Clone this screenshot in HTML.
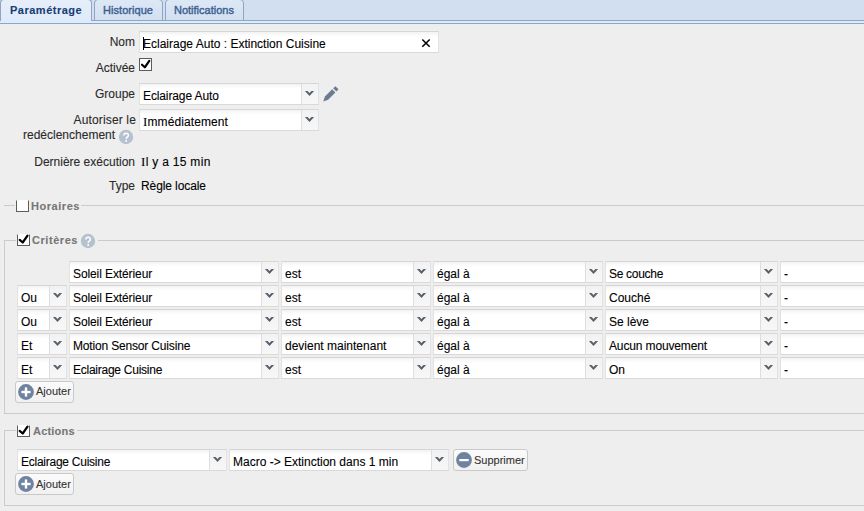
<!DOCTYPE html>
<html><head><meta charset="utf-8"><style>
html,body{margin:0;padding:0;}
body{width:864px;height:511px;overflow:hidden;position:relative;background:#eeeeee;font-family:'Liberation Sans', sans-serif;}
div{box-sizing:content-box;}
.t{-webkit-text-stroke:0.1px currentColor;}
.fld{position:absolute;background:linear-gradient(#f2f2f2,#fbfbfb 3px,#fff 5px);border:1px solid #e2e2e2;border-top-color:#d6d6d6;border-bottom-color:#d9d9d9;}
.trg{position:absolute;background:linear-gradient(#f2f2f2,#f7f7f7);border-left:1px solid #dedede;}
.btn{position:absolute;border:1px solid #c9c9c9;border-radius:3px;background:linear-gradient(#fbfbfb,#f1f1f1);}
.ln{position:absolute;background:#cbcbcb;}
</style></head><body>
<div style="position:absolute;left:0;top:0;width:864px;height:20px;background:#d2dff0;border-bottom:1px solid #8fa5c2"></div>
<div style="position:absolute;left:0;top:21px;width:864px;height:2px;background:#deebfb;border-bottom:1px solid #8fa5c2"></div>
<div style="position:absolute;left:0;top:24px;width:864px;height:1px;background:#e9eff0"></div>
<div style="position:absolute;left:94px;top:-1px;width:67px;height:20px;background:linear-gradient(#dde8f6,#d3e0f1);border:1px solid #8fa5c2;border-radius:4px 4px 0 0"></div>
<div style="position:absolute;left:165px;top:-1px;width:77px;height:20px;background:linear-gradient(#dde8f6,#d3e0f1);border:1px solid #8fa5c2;border-radius:4px 4px 0 0"></div>
<div style="position:absolute;left:0px;top:-1px;width:90px;height:21px;background:linear-gradient(#e6eef9,#deebfb);border:1px solid #8fa5c2;border-bottom:0;border-radius:4px 4px 0 0"></div>
<div class="t" style="position:absolute;top:4px;font:bold 11px/13px 'Liberation Sans', sans-serif;color:#173d75;white-space:nowrap;letter-spacing:0.5px;left:10px;">Paramétrage</div>
<div class="t" style="position:absolute;top:4px;font:normal 11px/13px 'Liberation Sans', sans-serif;color:#3d5f92;white-space:nowrap;letter-spacing:0.05px;left:103px;-webkit-text-stroke:0.4px #3d5f92;">Historique</div>
<div class="t" style="position:absolute;top:4px;font:normal 11px/13px 'Liberation Sans', sans-serif;color:#3d5f92;white-space:nowrap;left:174px;-webkit-text-stroke:0.4px #3d5f92;">Notifications</div>
<div class="t" style="position:absolute;top:35px;font:normal 12px/14px 'Liberation Sans', sans-serif;color:#2a2a2a;white-space:nowrap;right:729px;text-align:right;">Nom</div>
<div class="t" style="position:absolute;top:61px;font:normal 12px/14px 'Liberation Sans', sans-serif;color:#2a2a2a;white-space:nowrap;right:729px;text-align:right;">Activée</div>
<div class="t" style="position:absolute;top:87px;font:normal 12px/14px 'Liberation Sans', sans-serif;color:#2a2a2a;white-space:nowrap;right:729px;text-align:right;">Groupe</div>
<div class="t" style="position:absolute;top:113px;font:normal 12px/14px 'Liberation Sans', sans-serif;color:#2a2a2a;white-space:nowrap;letter-spacing:0.15px;right:728px;text-align:right;">Autoriser le</div>
<div class="t" style="position:absolute;top:128px;font:normal 12px/14px 'Liberation Sans', sans-serif;color:#2a2a2a;white-space:nowrap;left:23px;">redéclenchement</div>
<div class="t" style="position:absolute;top:155px;font:normal 12px/14px 'Liberation Sans', sans-serif;color:#2a2a2a;white-space:nowrap;right:729px;text-align:right;">Dernière exécution</div>
<div class="t" style="position:absolute;top:179px;font:normal 12px/14px 'Liberation Sans', sans-serif;color:#2a2a2a;white-space:nowrap;right:729px;text-align:right;">Type</div>
<div class="t" style="position:absolute;top:155px;font:normal 12px/14px 'Liberation Sans', sans-serif;color:#000;white-space:nowrap;letter-spacing:0.3px;left:141px;"><span style="font-family:'Liberation Serif';font-size:13px">I</span>l y a 15 min</div>
<div class="t" style="position:absolute;top:179px;font:normal 12px/14px 'Liberation Sans', sans-serif;color:#000;white-space:nowrap;letter-spacing:-0.1px;left:141px;">Règle locale</div>
<div class="fld" style="left:139px;top:31px;width:298px;height:20px"></div>
<div class="t" style="position:absolute;top:37px;font:normal 12px/14px 'Liberation Sans', sans-serif;color:#000;white-space:nowrap;left:143px;">Eclairage Auto : Extinction Cuisine</div>
<div style="position:absolute;left:143px;top:37px;width:1px;height:13px;background:#000"></div>
<svg width="10" height="10" style="position:absolute;left:421px;top:38px" viewBox="0 0 10 10"><path d="M1.3,1.5 L8.7,8.7 M8.7,1.5 L1.3,8.7" stroke="#000" stroke-width="1.6"/></svg>
<div style="position:absolute;left:139px;top:58px;width:11px;height:11px;background:#fff;border:1px solid #5c5c5c;"></div>
<svg width="13" height="13" style="position:absolute;left:139px;top:58px" viewBox="0 0 13 13"><path d="M3,6.7 L5.8,9.3 L10.3,2.9" fill="none" stroke="#000" stroke-width="2.2" stroke-linecap="round" stroke-linejoin="round"/></svg>
<div class="fld" style="left:139px;top:83px;width:178px;height:20px"></div>
<div class="trg" style="left:301px;top:84px;width:16px;height:20px"></div>
<svg width="11" height="6" style="position:absolute;left:304px;top:91px" viewBox="0 0 11 6"><path d="M0.9,0 L3.6,0 L5.5,2.1 L7.4,0 L10.1,0 L5.5,4.9 Z" fill="#58626e"/></svg>
<div class="t" style="position:absolute;top:89px;font:normal 12px/14px 'Liberation Sans', sans-serif;color:#000;white-space:nowrap;letter-spacing:-0.12px;left:143px;">Eclairage Auto</div>
<div class="fld" style="left:139px;top:109px;width:178px;height:20px"></div>
<div class="trg" style="left:301px;top:110px;width:16px;height:20px"></div>
<svg width="11" height="6" style="position:absolute;left:304px;top:117px" viewBox="0 0 11 6"><path d="M0.9,0 L3.6,0 L5.5,2.1 L7.4,0 L10.1,0 L5.5,4.9 Z" fill="#58626e"/></svg>
<div class="t" style="position:absolute;top:115px;font:normal 12px/14px 'Liberation Sans', sans-serif;color:#000;white-space:nowrap;letter-spacing:0.1px;left:143px;"><span style="font-family:'Liberation Serif';font-size:13px">I</span>mmédiatement</div>
<svg width="20" height="20" style="position:absolute;left:320px;top:84px" viewBox="0 0 20 20"><g transform="translate(3.3,17.4) rotate(-45)" fill="#6b7b91"><path d="M0,0 L4.6,-2.25 L14.8,-2.25 L14.8,2.25 L4.6,2.25 Z"/><rect x="16.2" y="-2.25" width="3.1" height="4.5"/></g></svg>
<svg width="16" height="16" style="position:absolute;left:118px;top:128.5px" viewBox="0 0 16 16"><circle cx="8" cy="8" r="7.2" fill="#b6c1d0"/><path d="M5.8,6.4 C5.8,3.5 10.4,3.5 10.4,6.2 C10.4,7.9 8.2,8 8.2,10" fill="none" stroke="#fff" stroke-width="1.5"/><rect x="7.35" y="11.1" width="1.7" height="1.7" fill="#fff"/></svg>
<div class="ln" style="left:4px;top:205px;width:11px;height:1px"></div>
<div class="ln" style="left:81px;top:205px;width:783px;height:1px"></div>
<div style="position:absolute;left:16px;top:200px;width:11px;height:11px;background:#fff;border:1px solid #5c5c5c;border-top-color:transparent;height:10px;"></div>
<div class="t" style="position:absolute;top:200px;font:bold 11px/13px 'Liberation Sans', sans-serif;color:#777;white-space:nowrap;letter-spacing:0.55px;left:31px;">Horaires</div>
<div class="ln" style="left:4px;top:240px;width:12px;height:1px"></div>
<div class="ln" style="left:98px;top:240px;width:766px;height:1px"></div>
<div class="ln" style="left:4px;top:240px;width:1px;height:174px"></div>
<div class="ln" style="left:4px;top:413px;width:860px;height:1px"></div>
<div style="position:absolute;left:17px;top:234px;width:11px;height:11px;background:#fff;border:1px solid #5c5c5c;border-top-color:transparent;height:10px;"></div>
<svg width="13" height="13" style="position:absolute;left:17px;top:234px" viewBox="0 0 13 13"><path d="M2.7,5.9 L5.7,8.5 L10.5,1.7" fill="none" stroke="#000" stroke-width="2.2" stroke-linecap="round" stroke-linejoin="round"/></svg>
<div class="t" style="position:absolute;top:234px;font:bold 11px/13px 'Liberation Sans', sans-serif;color:#777;white-space:nowrap;letter-spacing:0.55px;left:32px;">Critères</div>
<svg width="16" height="16" style="position:absolute;left:80px;top:233px" viewBox="0 0 16 16"><circle cx="8" cy="8" r="7.2" fill="#b6c1d0"/><path d="M5.8,6.4 C5.8,3.5 10.4,3.5 10.4,6.2 C10.4,7.9 8.2,8 8.2,10" fill="none" stroke="#fff" stroke-width="1.5"/><rect x="7.35" y="11.1" width="1.7" height="1.7" fill="#fff"/></svg>
<div class="fld" style="left:69px;top:261px;width:208px;height:20px"></div>
<div class="trg" style="left:261px;top:262px;width:16px;height:20px"></div>
<svg width="11" height="6" style="position:absolute;left:264px;top:269px" viewBox="0 0 11 6"><path d="M0.9,0 L3.6,0 L5.5,2.1 L7.4,0 L10.1,0 L5.5,4.9 Z" fill="#58626e"/></svg>
<div class="t" style="position:absolute;top:267px;font:normal 12px/14px 'Liberation Sans', sans-serif;color:#000;white-space:nowrap;letter-spacing:-0.1px;left:73px;">Soleil Extérieur</div>
<div class="fld" style="left:281px;top:261px;width:148px;height:20px"></div>
<div class="trg" style="left:413px;top:262px;width:16px;height:20px"></div>
<svg width="11" height="6" style="position:absolute;left:416px;top:269px" viewBox="0 0 11 6"><path d="M0.9,0 L3.6,0 L5.5,2.1 L7.4,0 L10.1,0 L5.5,4.9 Z" fill="#58626e"/></svg>
<div class="t" style="position:absolute;top:267px;font:normal 12px/14px 'Liberation Sans', sans-serif;color:#000;white-space:nowrap;left:285px;">est</div>
<div class="fld" style="left:433px;top:261px;width:168px;height:20px"></div>
<div class="trg" style="left:585px;top:262px;width:16px;height:20px"></div>
<svg width="11" height="6" style="position:absolute;left:588px;top:269px" viewBox="0 0 11 6"><path d="M0.9,0 L3.6,0 L5.5,2.1 L7.4,0 L10.1,0 L5.5,4.9 Z" fill="#58626e"/></svg>
<div class="t" style="position:absolute;top:267px;font:normal 12px/14px 'Liberation Sans', sans-serif;color:#000;white-space:nowrap;left:437px;">égal à</div>
<div class="fld" style="left:605px;top:261px;width:171px;height:20px"></div>
<div class="trg" style="left:760px;top:262px;width:16px;height:20px"></div>
<svg width="11" height="6" style="position:absolute;left:763px;top:269px" viewBox="0 0 11 6"><path d="M0.9,0 L3.6,0 L5.5,2.1 L7.4,0 L10.1,0 L5.5,4.9 Z" fill="#58626e"/></svg>
<div class="t" style="position:absolute;top:267px;font:normal 12px/14px 'Liberation Sans', sans-serif;color:#000;white-space:nowrap;letter-spacing:-0.3px;left:609px;">Se couche</div>
<div class="fld" style="left:780px;top:261px;width:119px;height:20px"></div>
<div class="t" style="position:absolute;top:267px;font:normal 12px/14px 'Liberation Sans', sans-serif;color:#000;white-space:nowrap;left:784px;">-</div>
<div class="fld" style="left:17px;top:285px;width:48px;height:20px"></div>
<div class="trg" style="left:49px;top:286px;width:16px;height:20px"></div>
<svg width="11" height="6" style="position:absolute;left:52px;top:293px" viewBox="0 0 11 6"><path d="M0.9,0 L3.6,0 L5.5,2.1 L7.4,0 L10.1,0 L5.5,4.9 Z" fill="#58626e"/></svg>
<div class="t" style="position:absolute;top:291px;font:normal 12px/14px 'Liberation Sans', sans-serif;color:#000;white-space:nowrap;left:21px;">Ou</div>
<div class="fld" style="left:69px;top:285px;width:208px;height:20px"></div>
<div class="trg" style="left:261px;top:286px;width:16px;height:20px"></div>
<svg width="11" height="6" style="position:absolute;left:264px;top:293px" viewBox="0 0 11 6"><path d="M0.9,0 L3.6,0 L5.5,2.1 L7.4,0 L10.1,0 L5.5,4.9 Z" fill="#58626e"/></svg>
<div class="t" style="position:absolute;top:291px;font:normal 12px/14px 'Liberation Sans', sans-serif;color:#000;white-space:nowrap;letter-spacing:-0.1px;left:73px;">Soleil Extérieur</div>
<div class="fld" style="left:281px;top:285px;width:148px;height:20px"></div>
<div class="trg" style="left:413px;top:286px;width:16px;height:20px"></div>
<svg width="11" height="6" style="position:absolute;left:416px;top:293px" viewBox="0 0 11 6"><path d="M0.9,0 L3.6,0 L5.5,2.1 L7.4,0 L10.1,0 L5.5,4.9 Z" fill="#58626e"/></svg>
<div class="t" style="position:absolute;top:291px;font:normal 12px/14px 'Liberation Sans', sans-serif;color:#000;white-space:nowrap;left:285px;">est</div>
<div class="fld" style="left:433px;top:285px;width:168px;height:20px"></div>
<div class="trg" style="left:585px;top:286px;width:16px;height:20px"></div>
<svg width="11" height="6" style="position:absolute;left:588px;top:293px" viewBox="0 0 11 6"><path d="M0.9,0 L3.6,0 L5.5,2.1 L7.4,0 L10.1,0 L5.5,4.9 Z" fill="#58626e"/></svg>
<div class="t" style="position:absolute;top:291px;font:normal 12px/14px 'Liberation Sans', sans-serif;color:#000;white-space:nowrap;left:437px;">égal à</div>
<div class="fld" style="left:605px;top:285px;width:171px;height:20px"></div>
<div class="trg" style="left:760px;top:286px;width:16px;height:20px"></div>
<svg width="11" height="6" style="position:absolute;left:763px;top:293px" viewBox="0 0 11 6"><path d="M0.9,0 L3.6,0 L5.5,2.1 L7.4,0 L10.1,0 L5.5,4.9 Z" fill="#58626e"/></svg>
<div class="t" style="position:absolute;top:291px;font:normal 12px/14px 'Liberation Sans', sans-serif;color:#000;white-space:nowrap;left:609px;">Couché</div>
<div class="fld" style="left:780px;top:285px;width:119px;height:20px"></div>
<div class="t" style="position:absolute;top:291px;font:normal 12px/14px 'Liberation Sans', sans-serif;color:#000;white-space:nowrap;left:784px;">-</div>
<div class="fld" style="left:17px;top:309px;width:48px;height:20px"></div>
<div class="trg" style="left:49px;top:310px;width:16px;height:20px"></div>
<svg width="11" height="6" style="position:absolute;left:52px;top:317px" viewBox="0 0 11 6"><path d="M0.9,0 L3.6,0 L5.5,2.1 L7.4,0 L10.1,0 L5.5,4.9 Z" fill="#58626e"/></svg>
<div class="t" style="position:absolute;top:315px;font:normal 12px/14px 'Liberation Sans', sans-serif;color:#000;white-space:nowrap;left:21px;">Ou</div>
<div class="fld" style="left:69px;top:309px;width:208px;height:20px"></div>
<div class="trg" style="left:261px;top:310px;width:16px;height:20px"></div>
<svg width="11" height="6" style="position:absolute;left:264px;top:317px" viewBox="0 0 11 6"><path d="M0.9,0 L3.6,0 L5.5,2.1 L7.4,0 L10.1,0 L5.5,4.9 Z" fill="#58626e"/></svg>
<div class="t" style="position:absolute;top:315px;font:normal 12px/14px 'Liberation Sans', sans-serif;color:#000;white-space:nowrap;letter-spacing:-0.1px;left:73px;">Soleil Extérieur</div>
<div class="fld" style="left:281px;top:309px;width:148px;height:20px"></div>
<div class="trg" style="left:413px;top:310px;width:16px;height:20px"></div>
<svg width="11" height="6" style="position:absolute;left:416px;top:317px" viewBox="0 0 11 6"><path d="M0.9,0 L3.6,0 L5.5,2.1 L7.4,0 L10.1,0 L5.5,4.9 Z" fill="#58626e"/></svg>
<div class="t" style="position:absolute;top:315px;font:normal 12px/14px 'Liberation Sans', sans-serif;color:#000;white-space:nowrap;left:285px;">est</div>
<div class="fld" style="left:433px;top:309px;width:168px;height:20px"></div>
<div class="trg" style="left:585px;top:310px;width:16px;height:20px"></div>
<svg width="11" height="6" style="position:absolute;left:588px;top:317px" viewBox="0 0 11 6"><path d="M0.9,0 L3.6,0 L5.5,2.1 L7.4,0 L10.1,0 L5.5,4.9 Z" fill="#58626e"/></svg>
<div class="t" style="position:absolute;top:315px;font:normal 12px/14px 'Liberation Sans', sans-serif;color:#000;white-space:nowrap;left:437px;">égal à</div>
<div class="fld" style="left:605px;top:309px;width:171px;height:20px"></div>
<div class="trg" style="left:760px;top:310px;width:16px;height:20px"></div>
<svg width="11" height="6" style="position:absolute;left:763px;top:317px" viewBox="0 0 11 6"><path d="M0.9,0 L3.6,0 L5.5,2.1 L7.4,0 L10.1,0 L5.5,4.9 Z" fill="#58626e"/></svg>
<div class="t" style="position:absolute;top:315px;font:normal 12px/14px 'Liberation Sans', sans-serif;color:#000;white-space:nowrap;left:609px;">Se lève</div>
<div class="fld" style="left:780px;top:309px;width:119px;height:20px"></div>
<div class="t" style="position:absolute;top:315px;font:normal 12px/14px 'Liberation Sans', sans-serif;color:#000;white-space:nowrap;left:784px;">-</div>
<div class="fld" style="left:17px;top:333px;width:48px;height:20px"></div>
<div class="trg" style="left:49px;top:334px;width:16px;height:20px"></div>
<svg width="11" height="6" style="position:absolute;left:52px;top:341px" viewBox="0 0 11 6"><path d="M0.9,0 L3.6,0 L5.5,2.1 L7.4,0 L10.1,0 L5.5,4.9 Z" fill="#58626e"/></svg>
<div class="t" style="position:absolute;top:339px;font:normal 12px/14px 'Liberation Sans', sans-serif;color:#000;white-space:nowrap;left:21px;">Et</div>
<div class="fld" style="left:69px;top:333px;width:208px;height:20px"></div>
<div class="trg" style="left:261px;top:334px;width:16px;height:20px"></div>
<svg width="11" height="6" style="position:absolute;left:264px;top:341px" viewBox="0 0 11 6"><path d="M0.9,0 L3.6,0 L5.5,2.1 L7.4,0 L10.1,0 L5.5,4.9 Z" fill="#58626e"/></svg>
<div class="t" style="position:absolute;top:339px;font:normal 12px/14px 'Liberation Sans', sans-serif;color:#000;white-space:nowrap;letter-spacing:-0.17px;left:73px;">Motion Sensor Cuisine</div>
<div class="fld" style="left:281px;top:333px;width:148px;height:20px"></div>
<div class="trg" style="left:413px;top:334px;width:16px;height:20px"></div>
<svg width="11" height="6" style="position:absolute;left:416px;top:341px" viewBox="0 0 11 6"><path d="M0.9,0 L3.6,0 L5.5,2.1 L7.4,0 L10.1,0 L5.5,4.9 Z" fill="#58626e"/></svg>
<div class="t" style="position:absolute;top:339px;font:normal 12px/14px 'Liberation Sans', sans-serif;color:#000;white-space:nowrap;left:285px;">devient maintenant</div>
<div class="fld" style="left:433px;top:333px;width:168px;height:20px"></div>
<div class="trg" style="left:585px;top:334px;width:16px;height:20px"></div>
<svg width="11" height="6" style="position:absolute;left:588px;top:341px" viewBox="0 0 11 6"><path d="M0.9,0 L3.6,0 L5.5,2.1 L7.4,0 L10.1,0 L5.5,4.9 Z" fill="#58626e"/></svg>
<div class="t" style="position:absolute;top:339px;font:normal 12px/14px 'Liberation Sans', sans-serif;color:#000;white-space:nowrap;left:437px;">égal à</div>
<div class="fld" style="left:605px;top:333px;width:171px;height:20px"></div>
<div class="trg" style="left:760px;top:334px;width:16px;height:20px"></div>
<svg width="11" height="6" style="position:absolute;left:763px;top:341px" viewBox="0 0 11 6"><path d="M0.9,0 L3.6,0 L5.5,2.1 L7.4,0 L10.1,0 L5.5,4.9 Z" fill="#58626e"/></svg>
<div class="t" style="position:absolute;top:339px;font:normal 12px/14px 'Liberation Sans', sans-serif;color:#000;white-space:nowrap;letter-spacing:-0.14px;left:609px;">Aucun mouvement</div>
<div class="fld" style="left:780px;top:333px;width:119px;height:20px"></div>
<div class="t" style="position:absolute;top:339px;font:normal 12px/14px 'Liberation Sans', sans-serif;color:#000;white-space:nowrap;left:784px;">-</div>
<div class="fld" style="left:17px;top:357px;width:48px;height:20px"></div>
<div class="trg" style="left:49px;top:358px;width:16px;height:20px"></div>
<svg width="11" height="6" style="position:absolute;left:52px;top:365px" viewBox="0 0 11 6"><path d="M0.9,0 L3.6,0 L5.5,2.1 L7.4,0 L10.1,0 L5.5,4.9 Z" fill="#58626e"/></svg>
<div class="t" style="position:absolute;top:363px;font:normal 12px/14px 'Liberation Sans', sans-serif;color:#000;white-space:nowrap;left:21px;">Et</div>
<div class="fld" style="left:69px;top:357px;width:208px;height:20px"></div>
<div class="trg" style="left:261px;top:358px;width:16px;height:20px"></div>
<svg width="11" height="6" style="position:absolute;left:264px;top:365px" viewBox="0 0 11 6"><path d="M0.9,0 L3.6,0 L5.5,2.1 L7.4,0 L10.1,0 L5.5,4.9 Z" fill="#58626e"/></svg>
<div class="t" style="position:absolute;top:363px;font:normal 12px/14px 'Liberation Sans', sans-serif;color:#000;white-space:nowrap;letter-spacing:-0.25px;left:73px;">Eclairage Cuisine</div>
<div class="fld" style="left:281px;top:357px;width:148px;height:20px"></div>
<div class="trg" style="left:413px;top:358px;width:16px;height:20px"></div>
<svg width="11" height="6" style="position:absolute;left:416px;top:365px" viewBox="0 0 11 6"><path d="M0.9,0 L3.6,0 L5.5,2.1 L7.4,0 L10.1,0 L5.5,4.9 Z" fill="#58626e"/></svg>
<div class="t" style="position:absolute;top:363px;font:normal 12px/14px 'Liberation Sans', sans-serif;color:#000;white-space:nowrap;left:285px;">est</div>
<div class="fld" style="left:433px;top:357px;width:168px;height:20px"></div>
<div class="trg" style="left:585px;top:358px;width:16px;height:20px"></div>
<svg width="11" height="6" style="position:absolute;left:588px;top:365px" viewBox="0 0 11 6"><path d="M0.9,0 L3.6,0 L5.5,2.1 L7.4,0 L10.1,0 L5.5,4.9 Z" fill="#58626e"/></svg>
<div class="t" style="position:absolute;top:363px;font:normal 12px/14px 'Liberation Sans', sans-serif;color:#000;white-space:nowrap;left:437px;">égal à</div>
<div class="fld" style="left:605px;top:357px;width:171px;height:20px"></div>
<div class="trg" style="left:760px;top:358px;width:16px;height:20px"></div>
<svg width="11" height="6" style="position:absolute;left:763px;top:365px" viewBox="0 0 11 6"><path d="M0.9,0 L3.6,0 L5.5,2.1 L7.4,0 L10.1,0 L5.5,4.9 Z" fill="#58626e"/></svg>
<div class="t" style="position:absolute;top:363px;font:normal 12px/14px 'Liberation Sans', sans-serif;color:#000;white-space:nowrap;left:609px;">On</div>
<div class="fld" style="left:780px;top:357px;width:119px;height:20px"></div>
<div class="t" style="position:absolute;top:363px;font:normal 12px/14px 'Liberation Sans', sans-serif;color:#000;white-space:nowrap;left:784px;">-</div>
<div class="btn" style="left:15px;top:381px;width:57px;height:20px"></div>
<svg width="18" height="18" style="position:absolute;left:17px;top:382.5px" viewBox="0 0 18 18"><circle cx="9" cy="9" r="7.9" fill="#6d839f"/><rect x="4.4" y="7.8" width="9.2" height="2.4" fill="#fff"/><rect x="7.8" y="4.4" width="2.4" height="9.2" fill="#fff"/></svg>
<div class="t" style="position:absolute;top:385px;font:normal 11px/13px 'Liberation Sans', sans-serif;color:#333;white-space:nowrap;left:36px;">Ajouter</div>
<div class="ln" style="left:4px;top:430px;width:12px;height:1px"></div>
<div class="ln" style="left:77px;top:430px;width:787px;height:1px"></div>
<div class="ln" style="left:4px;top:430px;width:1px;height:76px"></div>
<div class="ln" style="left:4px;top:505px;width:860px;height:1px"></div>
<div style="position:absolute;left:17px;top:425px;width:11px;height:11px;background:#fff;border:1px solid #5c5c5c;border-top-color:transparent;height:10px;"></div>
<svg width="13" height="13" style="position:absolute;left:17px;top:425px" viewBox="0 0 13 13"><path d="M2.7,5.9 L5.7,8.5 L10.5,1.7" fill="none" stroke="#000" stroke-width="2.2" stroke-linecap="round" stroke-linejoin="round"/></svg>
<div class="t" style="position:absolute;top:425px;font:bold 11px/13px 'Liberation Sans', sans-serif;color:#777;white-space:nowrap;letter-spacing:0.2px;left:33px;">Actions</div>
<div class="fld" style="left:17px;top:449px;width:208px;height:20px"></div>
<div class="trg" style="left:209px;top:450px;width:16px;height:20px"></div>
<svg width="11" height="6" style="position:absolute;left:212px;top:457px" viewBox="0 0 11 6"><path d="M0.9,0 L3.6,0 L5.5,2.1 L7.4,0 L10.1,0 L5.5,4.9 Z" fill="#58626e"/></svg>
<div class="t" style="position:absolute;top:455px;font:normal 12px/14px 'Liberation Sans', sans-serif;color:#000;white-space:nowrap;letter-spacing:-0.25px;left:21px;">Eclairage Cuisine</div>
<div class="fld" style="left:229px;top:449px;width:218px;height:20px"></div>
<div class="trg" style="left:431px;top:450px;width:16px;height:20px"></div>
<svg width="11" height="6" style="position:absolute;left:434px;top:457px" viewBox="0 0 11 6"><path d="M0.9,0 L3.6,0 L5.5,2.1 L7.4,0 L10.1,0 L5.5,4.9 Z" fill="#58626e"/></svg>
<div class="t" style="position:absolute;top:455px;font:normal 12px/14px 'Liberation Sans', sans-serif;color:#000;white-space:nowrap;left:233px;">Macro -&gt; Extinction dans 1 min</div>
<div class="btn" style="left:453px;top:449px;width:73px;height:20px"></div>
<svg width="18" height="18" style="position:absolute;left:455px;top:450.5px" viewBox="0 0 18 18"><circle cx="9" cy="9" r="7.9" fill="#6d839f"/><rect x="4.3" y="8" width="9.4" height="2.2" fill="#fff"/></svg>
<div class="t" style="position:absolute;top:454px;font:normal 11px/13px 'Liberation Sans', sans-serif;color:#333;white-space:nowrap;left:474px;">Supprimer</div>
<div class="btn" style="left:15px;top:473px;width:57px;height:20px"></div>
<svg width="18" height="18" style="position:absolute;left:17px;top:474.5px" viewBox="0 0 18 18"><circle cx="9" cy="9" r="7.9" fill="#6d839f"/><rect x="4.4" y="7.8" width="9.2" height="2.4" fill="#fff"/><rect x="7.8" y="4.4" width="2.4" height="9.2" fill="#fff"/></svg>
<div class="t" style="position:absolute;top:478px;font:normal 11px/13px 'Liberation Sans', sans-serif;color:#333;white-space:nowrap;left:36px;">Ajouter</div>
</body></html>
